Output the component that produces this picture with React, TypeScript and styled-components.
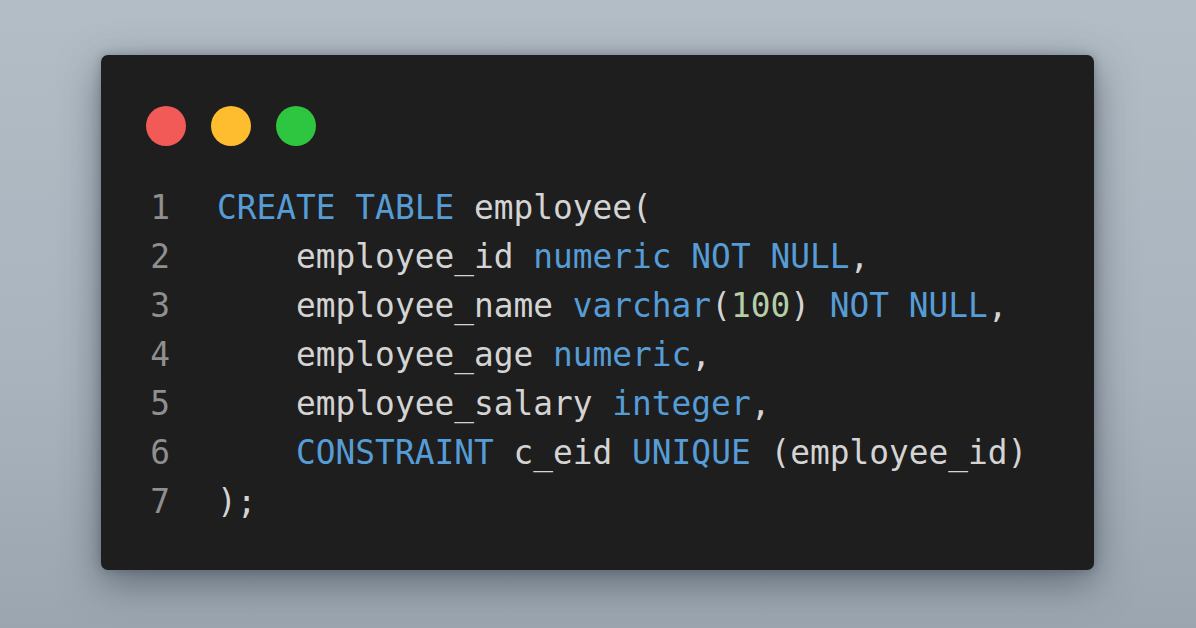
import React from "react";
import styled, { createGlobalStyle } from "styled-components";

const Global = createGlobalStyle`
  html, body { margin: 0; padding: 0; }
  body {
    width: 1196px;
    height: 628px;
    overflow: hidden;
    background: linear-gradient(180deg, #b3bdc6 0%, #a9b3bd 60%, #9aa5af 100%);
  }
`;

const Page = styled.div`
  width: 1196px;
  height: 628px;
  display: flex;
  justify-content: center;
  padding-top: 55px;
  padding-right: 1px;
  box-sizing: border-box;
`;

const Card = styled.div`
  width: 993px;
  height: 515px;
  background: #1e1e1e;
  border-radius: 7px;
  box-shadow: 0 12px 38px rgba(45, 55, 65, 0.55), 0 0 10px rgba(45, 55, 65, 0.3);
  box-sizing: border-box;
  padding: 51px 0 0 45px;
  display: flex;
  flex-direction: column;
`;

const Dots = styled.div`
  display: flex;
  gap: 25px;
`;

const Dot = styled.span<{ $c: string }>`
  width: 40px;
  height: 40px;
  border-radius: 50%;
  background: ${(p) => p.$c};
`;

const Code = styled.div`
  margin-top: 38px;
  display: flex;
  flex-direction: column;
  font-family: "DejaVu Sans Mono", "Liberation Mono", monospace;
  font-size: 32.85px;
  line-height: 49px;
  white-space: pre;
`;

const Line = styled.div`
  display: flex;
`;

const Num = styled.span`
  width: 20px;
  margin-left: 4px;
  margin-right: 47px;
  color: #8f8f8f;
  text-align: right;
`;

const Txt = styled.span`
  color: #d4d4d4;
`;

const Kw = styled.span`
  color: #569cd6;
`;

const N = styled.span`
  color: #b5cea8;
`;

type Part = [string, "t" | "k" | "n"];

const lines: Part[][] = [
  [["CREATE TABLE", "k"], [" employee(", "t"]],
  [["    employee_id ", "t"], ["numeric NOT NULL", "k"], [",", "t"]],
  [["    employee_name ", "t"], ["varchar", "k"], ["(", "t"], ["100", "n"], [") ", "t"], ["NOT NULL", "k"], [",", "t"]],
  [["    employee_age ", "t"], ["numeric", "k"], [",", "t"]],
  [["    employee_salary ", "t"], ["integer", "k"], [",", "t"]],
  [["    ", "t"], ["CONSTRAINT", "k"], [" c_eid ", "t"], ["UNIQUE", "k"], [" (employee_id)", "t"]],
  [[");", "t"]],
];

export default function App() {
  return (
    <>
      <Global />
      <Page>
        <Card>
          <Dots>
            <Dot $c="#f25a58" />
            <Dot $c="#fdbd2e" />
            <Dot $c="#2ec640" />
          </Dots>
          <Code>
            {lines.map((parts, i) => (
              <Line key={i}>
                <Num>{i + 1}</Num>
                {parts.map(([s, k], j) =>
                  k === "k" ? <Kw key={j}>{s}</Kw> : k === "n" ? <N key={j}>{s}</N> : <Txt key={j}>{s}</Txt>
                )}
              </Line>
            ))}
          </Code>
        </Card>
      </Page>
    </>
  );
}
